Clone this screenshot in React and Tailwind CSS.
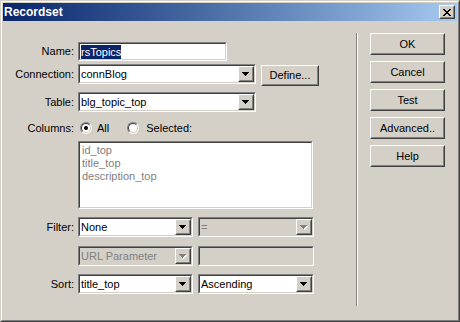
// Dialog "Recordset" i klassisk Windows-stil
function Sunken({ className = "", bg = "bg-white", children }) {
  return (
    <div className={`border border-t-[#808080] border-l-[#808080] border-b-white border-r-white ${className}`}>
      <div className={`h-full w-full border border-t-[#404040] border-l-[#404040] border-b-[#d4d0c8] border-r-[#d4d0c8] ${bg}`}>
        {children}
      </div>
    </div>
  );
}

function Raised({ className = "", children }) {
  return (
    <div className={`border border-t-white border-l-white border-b-[#404040] border-r-[#404040] bg-[#d4d0c8] ${className}`}>
      <div className="h-full w-full border border-t-[#d4d0c8] border-l-[#d4d0c8] border-b-[#808080] border-r-[#808080] flex items-center justify-center">
        {children}
      </div>
    </div>
  );
}

function Arrow({ disabled }) {
  const c = disabled ? "#808080" : "#000";
  return (
    <svg width="8" height="5" viewBox="0 0 8 5" shapeRendering="crispEdges">
      {disabled && (
        <g fill="#fff">
          <rect x="1" y="1" width="7" height="1" />
          <rect x="2" y="2" width="5" height="1" />
          <rect x="3" y="3" width="3" height="1" />
          <rect x="4" y="4" width="1" height="1" />
        </g>
      )}
      <g fill={c}>
        <rect x="0" y="0" width="7" height="1" />
        <rect x="1" y="1" width="5" height="1" />
        <rect x="2" y="2" width="3" height="1" />
        <rect x="3" y="3" width="1" height="1" />
      </g>
    </svg>
  );
}

function Combo({ w, value, disabled }) {
  return (
    <Sunken className={`${w} h-[20px]`} bg={disabled ? "bg-[#d4d0c8]" : "bg-white"}>
      <div className="flex h-full">
        <span className={`flex-1 pl-px leading-[16px] truncate ${disabled ? "text-[#808080]" : "text-black"}`}>{value}</span>
        <Raised className="w-[16px] h-[16px]">
          <Arrow disabled={disabled} />
        </Raised>
      </div>
    </Sunken>
  );
}

function Label({ children }) {
  return <span className="w-[71px] mr-[4px] text-right shrink-0">{children}</span>;
}

function Radio({ checked }) {
  return (
    <div className="w-[12px] h-[12px] rounded-full border border-t-[#808080] border-l-[#808080] border-b-white border-r-white">
      <div className="w-full h-full rounded-full border border-t-[#404040] border-l-[#404040] border-b-[#d4d0c8] border-r-[#d4d0c8] bg-white flex items-center justify-center">
        {checked && <div className="w-[4px] h-[4px] rounded-full bg-black" />}
      </div>
    </div>
  );
}

function CloseIcon() {
  return (
    <svg width="8" height="7" viewBox="0 0 8 7" shapeRendering="crispEdges" fill="#000">
      <rect x="0" y="0" width="2" height="1" />
      <rect x="6" y="0" width="2" height="1" />
      <rect x="1" y="1" width="2" height="1" />
      <rect x="5" y="1" width="2" height="1" />
      <rect x="2" y="2" width="4" height="1" />
      <rect x="3" y="3" width="2" height="1" />
      <rect x="2" y="4" width="4" height="1" />
      <rect x="1" y="5" width="2" height="1" />
      <rect x="5" y="5" width="2" height="1" />
      <rect x="0" y="6" width="2" height="1" />
      <rect x="6" y="6" width="2" height="1" />
    </svg>
  );
}

export default function App() {
  const knappar = ["OK", "Cancel", "Test", "Advanced..", "Help"];
  return (
    <div className="w-[460px] h-[322px] bg-[#d4d0c8] border border-t-[#d4d0c8] border-l-[#d4d0c8] border-b-[#404040] border-r-[#404040] font-['Liberation_Sans',Arial,sans-serif] text-[11px] text-black overflow-hidden">
      <div className="h-full border border-t-white border-l-white border-b-[#808080] border-r-[#808080] p-px flex flex-col">
        {/* titelrad */}
        <div className="h-[18px] shrink-0 flex items-center justify-between bg-gradient-to-r from-[#0a246a] to-[#a6caf0] pl-[1px] pr-[2px]">
          <span className="text-white font-bold text-[12px] leading-none">Recordset</span>
          <Raised className="w-[16px] h-[14px]">
            <CloseIcon />
          </Raised>
        </div>

        <div className="flex flex-1">
          {/* formulär */}
          <div className="w-[353px] flex flex-col pt-[21px]">
            <div className="flex items-center h-[19px]">
              <Label>Name:</Label>
              <Sunken className="w-[149px] h-[19px]">
                <div className="h-full flex items-center pl-px">
                  <span className="bg-[#0a246a] text-white leading-[14px]">rsTopics</span>
                </div>
              </Sunken>
            </div>

            <div className="flex items-start h-[22px] mt-[3px]">
              <Label><span className="leading-[20px]">Connection:</span></Label>
              <Combo w="w-[178px]" value="connBlog" />
              <Raised className="w-[58px] h-[21px] ml-[5px] mt-px">Define...</Raised>
            </div>

            <div className="flex items-center h-[20px] mt-[6px]">
              <Label>Table:</Label>
              <Combo w="w-[178px]" value="blg_topic_top" />
            </div>

            <div className="flex items-center h-[14px] mt-[9px]">
              <Label>Columns:</Label>
              <div className="ml-[2px]"><Radio checked /></div>
              <span className="ml-[5px]">All</span>
              <div className="ml-[18px]"><Radio /></div>
              <span className="ml-[7px]">Selected:</span>
            </div>

            <div className="flex mt-[6px]">
              <span className="w-[75px] shrink-0" />
              <Sunken className="w-[235px] h-[68px]">
                <div className="pl-[2px] pt-px leading-[13px] text-[#808080]">
                  <div>id_top</div>
                  <div>title_top</div>
                  <div>description_top</div>
                </div>
              </Sunken>
            </div>

            <div className="flex items-center h-[20px] mt-[8px]">
              <Label>Filter:</Label>
              <Combo w="w-[115px]" value="None" />
              <div className="ml-[5px]"><Combo w="w-[116px]" value="=" disabled /></div>
            </div>

            <div className="flex items-center h-[20px] mt-[9px]">
              <span className="w-[75px] shrink-0" />
              <Combo w="w-[115px]" value="URL Parameter" disabled />
              <Sunken className="w-[116px] h-[20px] ml-[5px]" bg="bg-[#d4d0c8]" />
            </div>

            <div className="flex items-center h-[20px] mt-[8px]">
              <Label>Sort:</Label>
              <Combo w="w-[115px]" value="title_top" />
              <div className="ml-[5px]"><Combo w="w-[116px]" value="Ascending" /></div>
            </div>
          </div>

          {/* avskiljare */}
          <div className="mt-[12px] h-[273px] w-[2px] border-l border-l-[#808080] border-r border-r-white" />

          {/* knappar */}
          <div className="flex flex-col gap-[6px] ml-[12px] pt-[12px]">
            {knappar.map((k) => (
              <Raised key={k} className="w-[75px] h-[22px]">{k}</Raised>
            ))}
          </div>
        </div>
      </div>
    </div>
  );
}
